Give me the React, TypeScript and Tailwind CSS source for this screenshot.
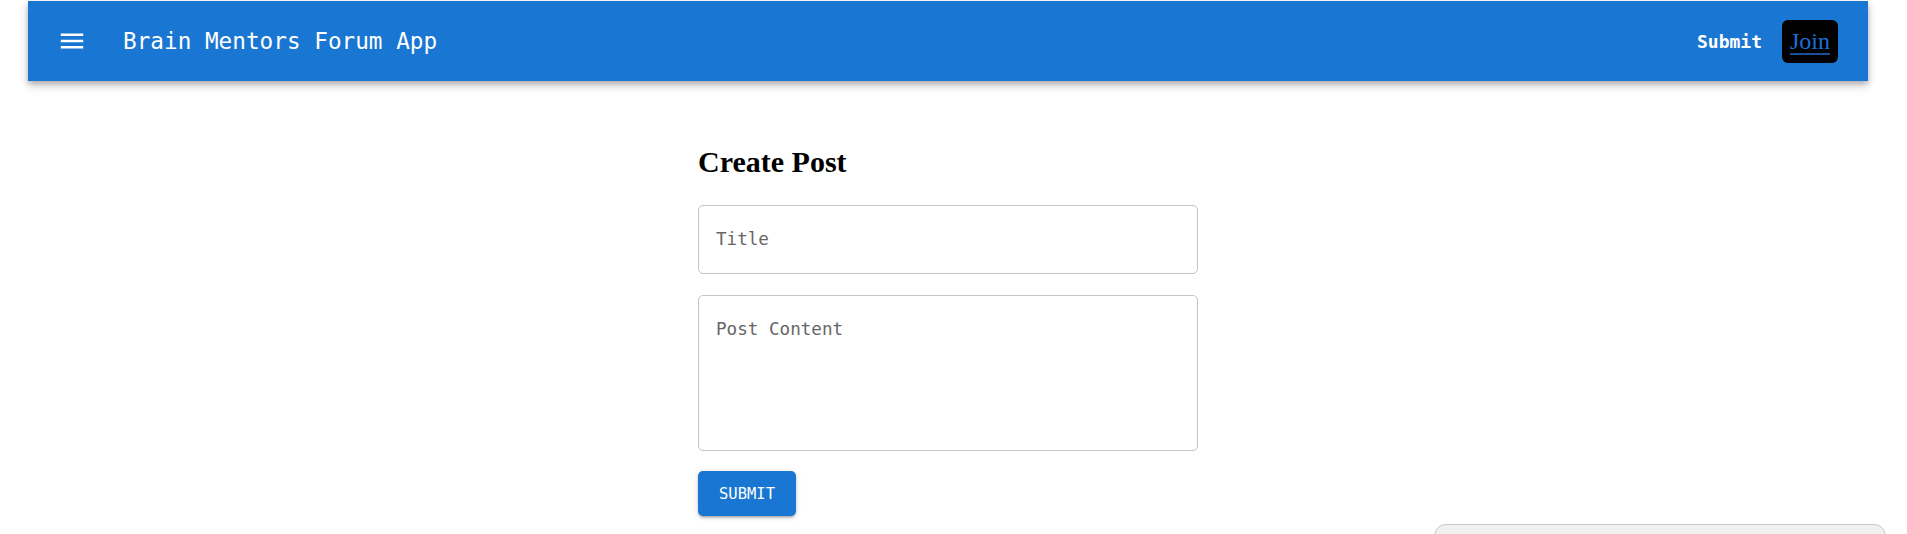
import React from 'react';

const MenuIcon = () => (
  <svg viewBox="0 0 24 24" className="w-[30px] h-[30px]" fill="white">
    <path d="M3 18h18v-2H3v2zm0-5h18v-2H3v2zm0-7v2h18V6H3z" />
  </svg>
);

const NavBar = () => (
  <header className="ml-[28px] mt-px w-[1840px] h-[80px] bg-[#1976d2] text-white flex items-center pl-[29px] pr-[30px] shadow-[0_3px_6px_rgba(0,0,0,0.25),0_5px_10px_rgba(0,0,0,0.12)]">
    <button type="button" className="w-[30px] h-[30px] flex items-center justify-center">
      <MenuIcon />
    </button>
    <h1 className="ml-[36px] text-[22.7px] leading-none font-['DejaVu_Sans_Mono',monospace] tracking-normal">
      Brain Mentors Forum App
    </h1>
    <div className="ml-auto flex items-center gap-[20px]">
      <span className="font-['DejaVu_Sans_Mono',monospace] font-bold text-[18px]">Submit</span>
      <button
        type="button"
        className="w-[56px] h-[43px] bg-black rounded-[6px] flex items-center justify-center font-['Liberation_Serif',serif] text-[24px] text-[#1a6fd8] underline decoration-[#1a4f9a] underline-offset-[4px]"
      >
        Join
      </button>
    </div>
  </header>
);

const CreatePost = () => (
  <main className="ml-[698px] w-[500px] mt-[64px] flex flex-col">
    <h2 className="font-['Liberation_Serif',serif] font-bold text-[30px] leading-[34px] text-black">Create Post</h2>
    <div className="mt-[26px] h-[69px] border border-[#c4c4c4] rounded-[5px] flex items-center px-[17px]">
      <span className="font-['DejaVu_Sans_Mono',monospace] text-[17.6px] text-[#666666]">Title</span>
    </div>
    <div className="mt-[21px] h-[156px] border border-[#c4c4c4] rounded-[5px] px-[17px] pt-[20px]">
      <span className="font-['DejaVu_Sans_Mono',monospace] text-[17.6px] text-[#666666]">Post Content</span>
    </div>
    <button
      type="button"
      className="mt-[20px] w-[98px] h-[45px] bg-[#1976d2] text-white rounded-[5px] font-['DejaVu_Sans_Mono',monospace] text-[15.5px] pt-[2px] shadow-[0_3px_2px_-2px_rgba(0,0,0,0.2),0_2px_3px_rgba(0,0,0,0.14),0_1px_6px_rgba(0,0,0,0.12)]"
    >
      SUBMIT
    </button>
  </main>
);

export default function App() {
  return (
    <div className="relative h-[534px] w-full overflow-hidden bg-white">
      <NavBar />
      <CreatePost />
      <div className="absolute left-[1434px] top-[524px] w-[452px] h-[40px] rounded-[12px] border border-[#c8c8c8] bg-[#f1f1f1]" />
    </div>
  );
}
